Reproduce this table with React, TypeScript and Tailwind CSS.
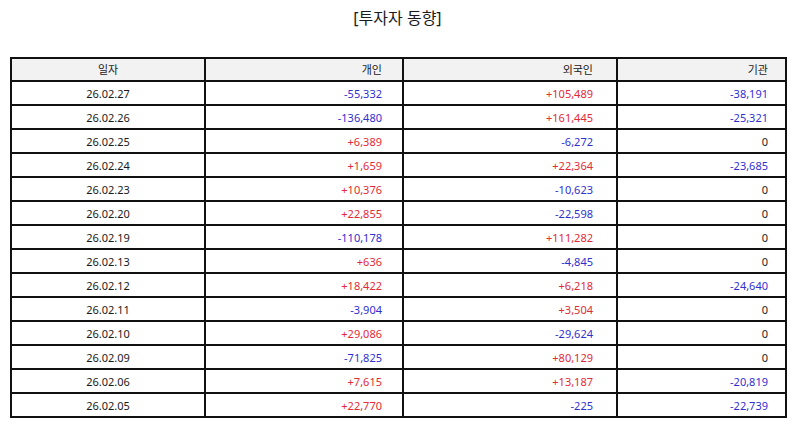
import React from "react"

type Row = { date: string; indiv: string; foreign: string; inst: string }

const rows: Row[] = [
  { date: "26.02.27", indiv: "-55,332", foreign: "+105,489", inst: "-38,191" },
  { date: "26.02.26", indiv: "-136,480", foreign: "+161,445", inst: "-25,321" },
  { date: "26.02.25", indiv: "+6,389", foreign: "-6,272", inst: "0" },
  { date: "26.02.24", indiv: "+1,659", foreign: "+22,364", inst: "-23,685" },
  { date: "26.02.23", indiv: "+10,376", foreign: "-10,623", inst: "0" },
  { date: "26.02.20", indiv: "+22,855", foreign: "-22,598", inst: "0" },
  { date: "26.02.19", indiv: "-110,178", foreign: "+111,282", inst: "0" },
  { date: "26.02.13", indiv: "+636", foreign: "-4,845", inst: "0" },
  { date: "26.02.12", indiv: "+18,422", foreign: "+6,218", inst: "-24,640" },
  { date: "26.02.11", indiv: "-3,904", foreign: "+3,504", inst: "0" },
  { date: "26.02.10", indiv: "+29,086", foreign: "-29,624", inst: "0" },
  { date: "26.02.09", indiv: "-71,825", foreign: "+80,129", inst: "0" },
  { date: "26.02.06", indiv: "+7,615", foreign: "+13,187", inst: "-20,819" },
  { date: "26.02.05", indiv: "+22,770", foreign: "-225", inst: "-22,739" },
]

// + is red, - is blue, zero stays black
function tone(v: string) {
  if (v.startsWith("+")) return "text-[#e32a36]"
  if (v.startsWith("-")) return "text-[#3030d0]"
  return "text-[#1a1a1a]"
}

const cell = "border-2 border-[#111] p-0"

export default function App() {
  return (
    <div
      className="w-[795px] h-[425px] bg-white text-[#1a1a1a]"
      style={{ fontFamily: '"Noto Sans", "Noto Sans CJK KR", sans-serif' }}
    >
      <div className="h-[57px] pt-[6px] text-center text-[16px] leading-[24px]">
        [투자자 동향]
      </div>

      <table className="ml-[10px] w-[775px] border-collapse table-fixed text-[11px] leading-none">
        <colgroup>
          <col className="w-[194px]" />
          <col className="w-[198px]" />
          <col className="w-[214px]" />
          <col className="w-[169px]" />
        </colgroup>
        <thead>
          <tr className="h-[23px] bg-[#f2f2f2]">
            <th className={`${cell} font-normal text-center`}>일자</th>
            <th className={`${cell} font-normal text-right pr-[20px]`}>개인</th>
            <th className={`${cell} font-normal text-right pr-[23px]`}>외국인</th>
            <th className={`${cell} font-normal text-right pr-[17px]`}>기관</th>
          </tr>
        </thead>
        <tbody>
          {rows.map((r) => (
            <tr key={r.date} className="h-[24px]">
              <td className={`${cell} text-center`}>{r.date}</td>
              <td className={`${cell} text-right pr-[20px] ${tone(r.indiv)}`}>{r.indiv}</td>
              <td className={`${cell} text-right pr-[23px] ${tone(r.foreign)}`}>{r.foreign}</td>
              <td className={`${cell} text-right pr-[17px] ${tone(r.inst)}`}>{r.inst}</td>
            </tr>
          ))}
        </tbody>
      </table>
    </div>
  )
}
